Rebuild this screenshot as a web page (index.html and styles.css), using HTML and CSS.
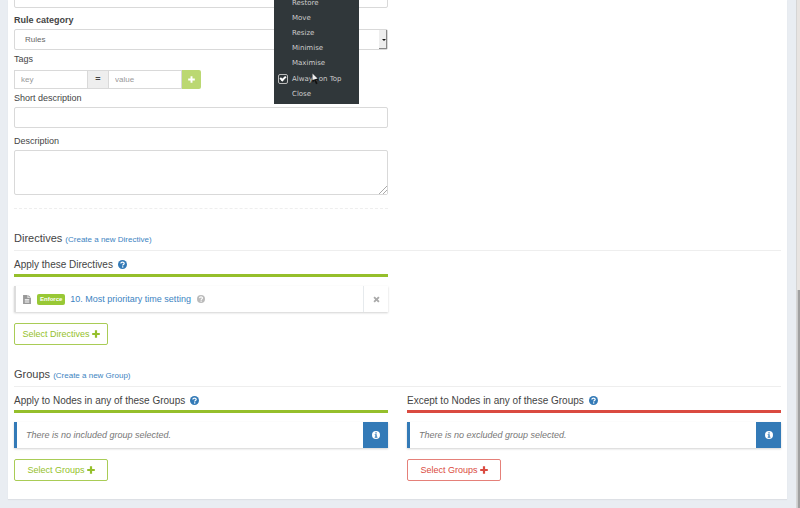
FILE: index.html
```html
<!DOCTYPE html>
<html lang="en">
<head>
    <meta charset="UTF-8">
    <meta name="viewport" content="width=device-width, initial-scale=1.0">
    <title>Rule</title>
    <link rel="stylesheet" href="styles.css">
</head>
<body>
    <svg class="sprite" aria-hidden="true">
        <symbol id="plus" viewBox="0 0 8 8"><path d="M2.900 .2h2.200v2.700h2.700v2.200H5.100v2.700H2.900V5.100H.2V2.900h2.700z"/></symbol>
        <symbol id="question" viewBox="0 0 16 16">
            <circle cx="8" cy="8" r="8"/>
            <path d="M5 6.2C5.2 2.9 11 2.9 11 6.2 11 8 8.3 8 8.3 9.9" fill="none" stroke="#fff" stroke-width="2.2"/>
            <path d="M7.1 11.2h2.4v2.2H7.1z" fill="#fff"/>
        </symbol>
        <symbol id="info" viewBox="0 0 16 16">
            <path fill-rule="evenodd" d="M8 0a8 8 0 1 1 0 16A8 8 0 0 1 8 0zM6.7 2.6v2.3h2.7V2.6zM5.4 6.3v1.6h1.3v3.7H5.4v1.7h5.4v-1.7H9.4V6.3z"/>
        </symbol>
        <symbol id="file" viewBox="0 0 14 16">
            <path fill-rule="evenodd" d="M0 0h8v5.500h6V16H0zM3 7v1.300h8V7zM3 9.600v1.300h8V9.600zM3 12.200v1.300h8v-1.300z"/>
            <path d="M9.300 0L14 4.400H9.300z"/>
        </symbol>
        <symbol id="cross" viewBox="0 0 8 8"><path d="M2 .5l2 2 2-2L7.500 2l-2 2 2 2L6 7.500l-2-2-2 2L.5 6l2-2-2-2z"/></symbol>
    </svg>

    <main class="panel">
        <form class="column">
            <input class="field name" type="text" aria-label="Name">

            <label class="label required" for="category">Rule category</label>
            <div class="select">
                <select class="field" id="category">
                    <option>Rules</option>
                </select>
            </div>

            <label class="label" for="tag-key">Tags</label>
            <div class="tags">
                <input class="tag-input" id="tag-key" type="text" placeholder="key">
                <span class="tag-equals">=</span>
                <input class="tag-input" type="text" placeholder="value" aria-label="Tag value">
                <button class="tag-add" type="button" aria-label="Add tag"><svg class="icon"><use href="#plus"/></svg></button>
            </div>

            <label class="label tight" for="short">Short description</label>
            <input class="field" id="short" type="text">

            <label class="label spaced" for="description">Description</label>
            <textarea class="field area" id="description"></textarea>
            <hr class="divider">
        </form>

        <section class="section">
            <h2 class="title">Directives <a class="create" href="#">(Create a new Directive)</a></h2>
            <div class="columns">
                <div class="target">
                    <h3 class="subtitle">Apply these Directives <svg class="icon help"><use href="#question"/></svg></h3>
                    <div class="item">
                        <svg class="icon file"><use href="#file"/></svg>
                        <span class="badge">Enforce</span>
                        <a class="item-name" href="#">10. Most prioritary time setting</a>
                        <svg class="icon hint"><use href="#question"/></svg>
                        <button class="item-action" type="button" aria-label="Remove"><svg class="icon"><use href="#cross"/></svg></button>
                    </div>
                    <button class="btn" type="button">Select Directives <svg class="icon"><use href="#plus"/></svg></button>
                </div>
            </div>
        </section>

        <section class="section">
            <h2 class="title">Groups <a class="create" href="#">(Create a new Group)</a></h2>
            <div class="columns">
                <div class="target">
                    <h3 class="subtitle">Apply to Nodes in any of these Groups <svg class="icon help"><use href="#question"/></svg></h3>
                    <div class="item empty">
                        <span class="item-text">There is no included group selected.</span>
                        <span class="item-action"><svg class="icon"><use href="#info"/></svg></span>
                    </div>
                    <button class="btn" type="button">Select Groups <svg class="icon"><use href="#plus"/></svg></button>
                </div>
                <div class="target except">
                    <h3 class="subtitle">Except to Nodes in any of these Groups <svg class="icon help"><use href="#question"/></svg></h3>
                    <div class="item empty">
                        <span class="item-text">There is no excluded group selected.</span>
                        <span class="item-action"><svg class="icon"><use href="#info"/></svg></span>
                    </div>
                    <button class="btn" type="button">Select Groups <svg class="icon"><use href="#plus"/></svg></button>
                </div>
            </div>
        </section>
    </main>

    <div class="scrollbar"><div class="thumb"></div></div>

    <!-- window menu -->
    <div class="menu">
        <button class="menu-item" type="button">Restore</button>
        <button class="menu-item" type="button">Move</button>
        <button class="menu-item" type="button">Resize</button>
        <button class="menu-item" type="button">Minimise</button>
        <button class="menu-item" type="button">Maximise</button>
        <label class="menu-item check" for="on-top"><input id="on-top" type="checkbox" checked>Always on Top</label>
        <button class="menu-item" type="button">Close</button>
        <svg class="pointer" viewBox="0 0 8 12"><path d="M.5.5v9l2-1.800 1.500 3.500 1.600-.7-1.500-3.300H7z" fill="#111"/><path d="M.5 7V.5l5 5" fill="#eee"/></svg>
    </div>
</body>
</html>
```

FILE: styles.css
```css
* {
    margin: 0;
    padding: 0;
    box-sizing: border-box;
}

body {
    display: flex;
    position: relative;
    min-height: 100vh;
    overflow: hidden;
    background-color: #e9edf2;
    color: #444;
    font-family: "Liberation Sans", Arial, sans-serif;
    font-size: 9px;
    line-height: 12px;
}

button,
input,
select,
textarea {
    font: inherit;
    color: inherit;
}

a {
    color: #3d84c2;
    text-decoration: none;
}

.sprite {
    position: absolute;
    width: 0;
    height: 0;
}

.icon {
    width: 8px;
    height: 8px;
    fill: currentColor;
    flex: none;
}

.panel {
    flex: 1;
    align-self: flex-start;
    margin: 0 9px 9px 8px;
    padding: 0 6px 18px;
    background-color: #fff;
    box-shadow: 0 1px 1px rgba(0, 0, 0, 0.05);
}

/* form */

.column {
    display: flex;
    flex-direction: column;
    width: calc(50% - 10px);
}

.field {
    width: 100%;
    height: 21px;
    padding: 0 10px;
    border: 1px solid #d9d9d9;
    border-radius: 2px;
    background-color: #fff;
    font-size: 8px;
}

.name {
    margin-top: -13px;
}

.label {
    padding: 3px 0 5px;
}

.required {
    padding: 6px 0 3px;
    font-weight: bold;
}

.tight {
    padding-bottom: 3px;
}

.spaced {
    padding: 7px 0 3px;
}

.select {
    position: relative;
}

.select .field {
    display: block;
    appearance: none;
    color: #666;
}

.select::before {
    content: "";
    position: absolute;
    top: 1px;
    right: 1px;
    bottom: 1px;
    width: 7px;
    background-color: #eee;
    border-right: 1px solid #888;
    border-bottom: 1px solid #888;
}

.select::after {
    content: "";
    position: absolute;
    top: 10px;
    right: 2px;
    border: 2px solid transparent;
    border-top-color: #111;
}

.tags {
    display: flex;
    height: 19px;
}

.tag-input {
    width: 74px;
    padding: 0 6px;
    border: 1px solid #d9d9d9;
    font-size: 8px;
}

.tag-input::placeholder {
    color: #999;
}

.tag-equals {
    width: 20px;
    border: solid #d9d9d9;
    border-width: 1px 0;
    background-color: #eee;
    line-height: 17px;
    font-weight: bold;
    text-align: center;
}

.tag-add {
    display: flex;
    align-items: center;
    justify-content: center;
    width: 19px;
    border: 0;
    border-radius: 0 2px 2px 0;
    background-color: #bbd872;
    color: #fff;
}

.tag-add .icon {
    width: 7px;
    height: 7px;
}

.area {
    height: 45px;
    resize: vertical;
}

.area::-webkit-resizer {
    background: linear-gradient(135deg, #fff 0 62%, transparent 62%), repeating-linear-gradient(135deg, #aaa 0 1px, #fff 1px 3px);
}

.divider {
    margin: 13px 0 0;
    border: 0;
    border-top: 1px dashed #eee;
}

/* directives and groups */

.section {
    padding-top: 22px;
}

.title {
    padding: 1px 0 4px;
    border-bottom: 1px solid #eee;
    font-size: 11px;
    font-weight: normal;
    line-height: 13px;
}

.create {
    font-size: 8px;
}

.columns {
    display: grid;
    grid-template-columns: 1fr 1fr;
    gap: 19px;
}

.target {
    --accent: #95bf2b;
    --accent-soft: #a9cc56;
}

.except {
    --accent: #da4a40;
    --accent-soft: #e58079;
}

.subtitle {
    display: flex;
    align-items: center;
    gap: 5px;
    padding: 7px 0 3px;
    border-bottom: 3px solid var(--accent);
    font-size: 10px;
    font-weight: normal;
    line-height: 13px;
}

.help {
    width: 9px;
    height: 9px;
    color: #337ab7;
}

.item {
    display: flex;
    align-items: center;
    height: 26px;
    margin: 9px 0 11px;
    padding-left: 7px;
    border-left: 2px solid #ddd;
    box-shadow: 0 1px 2px rgba(0, 0, 0, 0.18);
}

.file {
    height: 9px;
    margin-right: 6px;
    color: #999;
}

.badge {
    margin-right: 5px;
    padding: 0 3px;
    border-radius: 2px;
    background-color: #98c835;
    color: #fff;
    font-size: 6px;
    font-weight: bold;
    line-height: 11px;
}

.hint {
    margin-left: 6px;
    color: #bbb;
}

.item-action {
    display: flex;
    align-items: center;
    justify-content: center;
    align-self: stretch;
    width: 25px;
    margin-left: auto;
    border: 0;
    border-left: 1px solid #e6eaed;
    background: none;
    color: #aaa;
}

.item-action .icon {
    width: 7px;
    height: 7px;
}

.empty {
    padding-left: 9px;
    border-left: 3px solid #337ab7;
}

.item-text {
    color: #777;
    font-style: italic;
}

.empty .item-action {
    border: 0;
    background-color: #337ab7;
    color: #fff;
}

.empty .item-action .icon {
    width: 8px;
    height: 8px;
}

.btn {
    display: flex;
    align-items: center;
    justify-content: center;
    gap: 2px;
    width: 94px;
    height: 22px;
    border: 1px solid var(--accent-soft);
    border-radius: 2px;
    background-color: #fff;
    color: var(--accent);
}

/* browser scrollbar */

.scrollbar {
    display: flex;
    align-items: flex-end;
    width: 4px;
    border-left: 1px solid #d5d5d5;
    background-color: #e8e4e1;
}

.thumb {
    width: 100%;
    height: 43%;
    border-left: 1px solid #ccc;
    background-color: #a0a0a0;
}

/* window menu */

.menu {
    position: absolute;
    top: -4px;
    left: 274px;
    display: flex;
    flex-direction: column;
    width: 85px;
    padding-bottom: 2px;
    background-color: #30373a;
    color: #ccc;
    font-family: "DejaVu Sans", sans-serif;
    font-size: 7px;
}

.menu-item {
    height: 15px;
    padding-left: 18px;
    border: 0;
    background: none;
    line-height: 15px;
    text-align: left;
}

.check {
    display: flex;
    align-items: center;
    gap: 4px;
    height: 16px;
    padding-left: 4px;
}

.check input {
    position: relative;
    appearance: none;
    width: 10px;
    height: 10px;
    border: 1px solid #bbb;
    border-radius: 2px;
}

.check input:checked::after {
    content: "";
    position: absolute;
    top: 0;
    left: 2px;
    width: 2px;
    height: 4px;
    border: solid #fff;
    border-width: 0 2px 2px 0;
    transform: rotate(45deg);
}

.pointer {
    position: absolute;
    top: 77px;
    left: 38px;
    width: 8px;
    height: 12px;
}
```
